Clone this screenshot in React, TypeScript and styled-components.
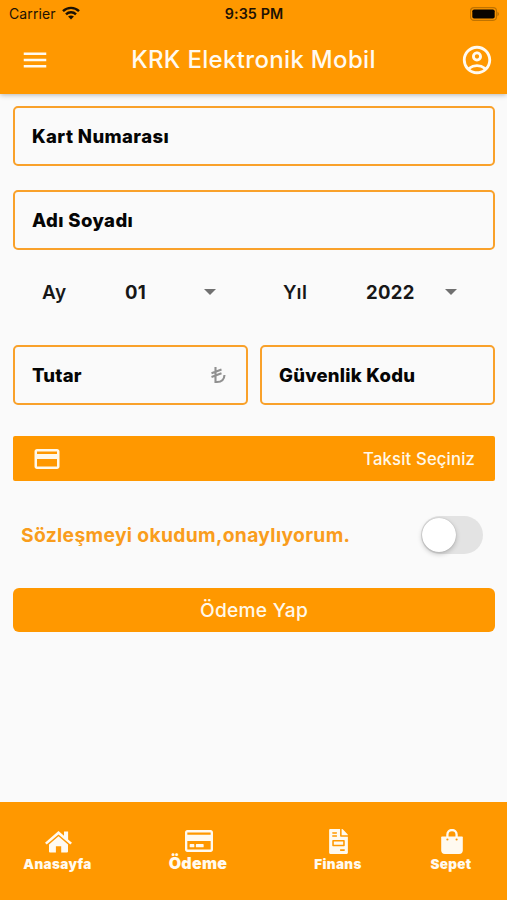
import React from "react";
import styled, { createGlobalStyle } from "styled-components";
import { MdMenu, MdOutlineAccountCircle, MdOutlineCreditCard } from "react-icons/md";
import { FaRegCreditCard, FaFileInvoice } from "react-icons/fa";

const orange = "#ff9800";

const GlobalStyle = createGlobalStyle`
  * { box-sizing: border-box; }
  body { margin: 0; background: #fafafa; font-family: Inter, "Noto Sans", sans-serif; }
  button { font: inherit; border: 0; padding: 0; background: none; }
`;

const Screen = styled.div`
  width: 507px;
  height: 900px;
  display: flex;
  flex-direction: column;
  background: #fafafa;
  overflow: hidden;
`;

const Header = styled.header`
  height: 94px;
  flex: none;
  background: ${orange};
  box-shadow: 0 1px 5px rgba(0, 0, 0, 0.28);
`;

const StatusBar = styled.div`
  height: 27px;
  display: grid;
  grid-template-columns: 1fr auto 1fr;
  align-items: center;
  padding: 0 8px 0 9px;
  color: #1c1204;
`;

const Carrier = styled.div`
  display: flex;
  align-items: center;
  gap: 6px;
  font-size: 14px;
  letter-spacing: 0.1px;
  svg { display: block; margin-top: -2px; }
`;

const Clock = styled.div`
  font-size: 14.3px;
  font-weight: 600;
  letter-spacing: 0.1px;
`;

const Battery = styled.svg`
  justify-self: end;
  display: block;
`;

const AppBar = styled.div`
  height: 65px;
  display: grid;
  grid-template-columns: 70px 1fr 70px;
  align-items: center;
  color: #fffaf0;
`;

const Title = styled.h1`
  margin: 0;
  text-align: center;
  font-size: 24px;
  font-weight: 500;
  letter-spacing: 0.33px;
  white-space: nowrap;
`;

const IconButton = styled.button<{ $end?: boolean }>`
  display: flex;
  justify-content: ${(p) => (p.$end ? "flex-end" : "flex-start")};
  padding: ${(p) => (p.$end ? "0 13px 0 0" : "0 0 0 20px")};
  color: inherit;
`;

const Form = styled.main`
  flex: 1;
  padding: 12px 12px 0 13px;
`;

const Field = styled.div<{ $gap?: number }>`
  height: 60px;
  margin-bottom: ${(p) => p.$gap ?? 0}px;
  padding: 0 20px 0 17px;
  display: flex;
  align-items: center;
  justify-content: space-between;
  border: 2px solid #f9a12a;
  border-radius: 5px;
  font-size: 18.5px;
  font-weight: 800;
  color: #050505;
`;

const FieldLabel = styled.span<{ $spacing?: number }>`
  letter-spacing: ${(p) => p.$spacing ?? 0.4}px;
`;

const FieldRow = styled.div`
  display: grid;
  grid-template-columns: 235px 235px;
  justify-content: space-between;
`;

const DateRow = styled.div`
  height: 84px;
  margin-bottom: 11px;
  display: grid;
  grid-template-columns: 1fr 1fr;
  align-items: center;
`;

const DateGroup = styled.div`
  display: grid;
  grid-template-columns: 82px 79px 13px;
  padding-left: 30px;
  align-items: center;
  font-size: 18.5px;
  color: #171717;
`;

const DateLabel = styled.span`
  margin-left: -1px;
  font-weight: 600;
  font-size: 19px;
  letter-spacing: 0.5px;
`;

const DateValue = styled.span`
  font-weight: 700;
  letter-spacing: 0.3px;
`;

const Caret = styled.span`
  border: 6px solid transparent;
  border-top-color: #707070;
  border-bottom: 0;
  width: 12px;
`;

const InstallmentBar = styled.button`
  width: 100%;
  height: 45px;
  margin-top: 31px;
  padding: 0 20px 0 19px;
  display: flex;
  align-items: center;
  justify-content: space-between;
  border-radius: 2px;
  background: ${orange};
  color: #fff8ea;
  font-size: 16.7px;
  font-weight: 500;
  letter-spacing: 0.15px;
`;

const Agreement = styled.div`
  height: 107px;
  padding: 0 12px 0 8px;
  display: flex;
  align-items: center;
  justify-content: space-between;
  color: #f99d1c;
  font-size: 19.3px;
  font-weight: 700;
  letter-spacing: 0.32px;
`;

const Toggle = styled.button`
  width: 62px;
  height: 38px;
  padding: 2px;
  border-radius: 19px;
  background: #e3e3e3;
  display: flex;
`;

const Knob = styled.span`
  width: 34px;
  height: 34px;
  margin-left: -1px;
  border-radius: 50%;
  background: #fff;
  box-shadow: 0 2px 5px rgba(0, 0, 0, 0.22), 0 0 1px rgba(0, 0, 0, 0.25);
`;

const PayButton = styled.button`
  width: 100%;
  height: 44px;
  border-radius: 6px;
  background: ${orange};
  color: #fff8ea;
  font-size: 19.2px;
  font-weight: 500;
  letter-spacing: 0.25px;
`;

const BottomNav = styled.nav`
  height: 98px;
  flex: none;
  display: grid;
  grid-template-columns: 115px 166px 114px 112px;
  background: ${orange};
  color: #fffaf0;
`;

const NavItem = styled.a<{ $active?: boolean }>`
  height: ${(p) => (p.$active ? 71 : 72)}px;
  display: flex;
  flex-direction: column;
  align-items: center;
  justify-content: flex-end;
  font-size: ${(p) => (p.$active ? 16 : 13.5)}px;
  line-height: 20px;
  font-weight: 900;
  letter-spacing: ${(p) => (p.$active ? 0.3 : 0.35)}px;
`;

const NavIcon = styled.span<{ $active?: boolean }>`
  height: 26px;
  margin: 0 0 ${(p) => (p.$active ? -1 : 0)}px ${(p) => (p.$active ? 2 : 1)}px;
  display: flex;
  align-items: center;
`;

const HomeIcon = () => (
  <svg width="27" height="22" viewBox="0 0 27 22" fill="currentColor">
    <path d="M13.5 0 19 4.8V.5h4.1v7.9L27 11.8l-1.7 1.8L13.5 3.4 1.7 13.6 0 11.8Z" />
    <path d="M13.5 5.2 23 13.4V20.6Q23 21.6 22 21.6H16.2V15.2H10.9V21.6H5Q4 21.6 4 20.6V13.4Z" />
  </svg>
);

const BagIcon = () => (
  <svg width="22" height="25" viewBox="0 0 22 25" fill="currentColor">
    <path d="M6.4 8.5V5.6a4.6 4.6 0 0 1 9.2 0V8.5" fill="none" stroke="currentColor" strokeWidth="2.3" />
    <path d="M1 7.5H21Q21.8 7.5 21.8 8.3V21.3Q21.8 24.9 18.2 24.9H3.8Q.2 24.9.2 21.3V8.3Q.2 7.5 1 7.5Z" />
    <circle cx="6.4" cy="10.5" r="1.1" fill={orange} />
    <circle cx="15.6" cy="10.5" r="1.1" fill={orange} />
  </svg>
);

export default function App() {
  return (
    <Screen>
      <GlobalStyle />
      <Header>
        <StatusBar>
          <Carrier>
            Carrier
            <svg width="18" height="14" viewBox="0 0 18 14" fill="none" stroke="#1c1204" strokeWidth="2.4">
              <path d="M1 5.2C5.5 0.7 12.5 0.7 17 5.2" />
              <path d="M4 8.3C6.8 5.5 11.2 5.5 14 8.3" />
              <path d="M9 13.5L6.1 10.6C7.8 9.1 10.2 9.1 11.9 10.6Z" fill="#1c1204" stroke="none" />
            </svg>
          </Carrier>
          <Clock>9:35 PM</Clock>
          <Battery width="29" height="14" viewBox="0 0 29 14">
            <rect x="0.5" y="0.7" width="26" height="12.6" rx="3.5" fill="none" stroke="#c07300" strokeWidth="1.2" />
            <rect x="2.3" y="2.5" width="22.4" height="9" rx="1.8" fill="#090500" />
            <path d="M27.5 4.8C29.3 5.7 29.3 8.3 27.5 9.2Z" fill="#b56c00" />
          </Battery>
        </StatusBar>
        <AppBar>
          <IconButton aria-label="Menü"><MdMenu size={30} /></IconButton>
          <Title>KRK Elektronik Mobil</Title>
          <IconButton $end aria-label="Hesap"><MdOutlineAccountCircle size={34} /></IconButton>
        </AppBar>
      </Header>
      <Form>
        <Field $gap={24}><FieldLabel>Kart Numarası</FieldLabel></Field>
        <Field><FieldLabel>Adı Soyadı</FieldLabel></Field>
        <DateRow>
          <DateGroup>
            <DateLabel>Ay</DateLabel>
            <DateValue>01</DateValue>
            <Caret />
          </DateGroup>
          <DateGroup>
            <DateLabel>Yıl</DateLabel>
            <DateValue>2022</DateValue>
            <Caret />
          </DateGroup>
        </DateRow>
        <FieldRow>
          <Field>
            <FieldLabel $spacing={0.2}>Tutar</FieldLabel>
            <svg width="15" height="17" viewBox="0 0 15 17" fill="none" stroke="#909090" strokeWidth="2.1">
              <path d="M4.5 0V15H6C10.5 15 13.2 12.5 13.5 8M0.5 6.2L10.5 2.5M0.5 10L10.5 6.3" />
            </svg>
          </Field>
          <Field><FieldLabel $spacing={0.25}>Güvenlik Kodu</FieldLabel></Field>
        </FieldRow>
        <InstallmentBar>
          <MdOutlineCreditCard size={30} />
          <span>Taksit Seçiniz</span>
        </InstallmentBar>
        <Agreement>
          <span>Sözleşmeyi okudum,onaylıyorum.</span>
          <Toggle role="switch" aria-checked={false}><Knob /></Toggle>
        </Agreement>
        <PayButton>Ödeme Yap</PayButton>
      </Form>
      <BottomNav>
        <NavItem><NavIcon $active><HomeIcon /></NavIcon>Anasayfa</NavItem>
        <NavItem $active><NavIcon $active><FaRegCreditCard size={28} /></NavIcon>Ödeme</NavItem>
        <NavItem><NavIcon><FaFileInvoice size={25} /></NavIcon>Finans</NavItem>
        <NavItem><NavIcon><BagIcon /></NavIcon>Sepet</NavItem>
      </BottomNav>
    </Screen>
  );
}
